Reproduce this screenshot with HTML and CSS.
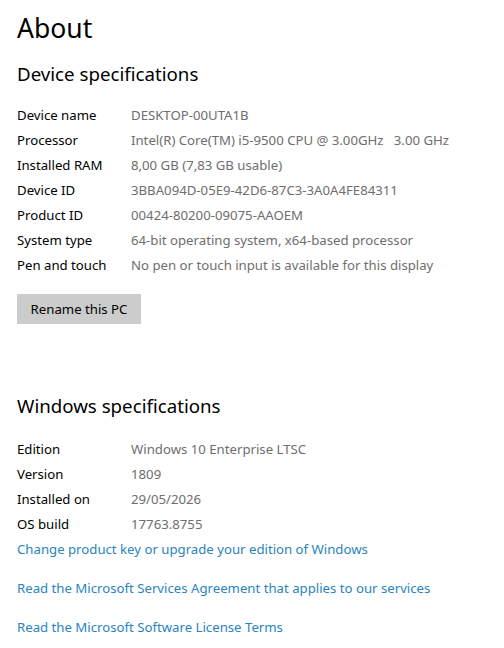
FILE: index.html
```html
<!DOCTYPE html>
<html>
<head>
  <meta charset="UTF-8">
  <title>About</title>
  <link rel="stylesheet" href="styles.css">
</head>
<body>
  <div class="page">
    <h1 class="title">About</h1>

    <h2 class="section">Device specifications</h2>
    <dl class="specs">
      <dt>Device name</dt><dd>DESKTOP-00UTA1B</dd>
      <dt>Processor</dt><dd>Intel(R) Core(TM) i5-9500 CPU @ 3.00GHz   3.00 GHz</dd>
      <dt>Installed RAM</dt><dd>8,00 GB (7,83 GB usable)</dd>
      <dt>Device ID</dt><dd>3BBA094D-05E9-42D6-87C3-3A0A4FE84311</dd>
      <dt>Product ID</dt><dd>00424-80200-09075-AAOEM</dd>
      <dt>System type</dt><dd>64-bit operating system, x64-based processor</dd>
      <dt>Pen and touch</dt><dd>No pen or touch input is available for this display</dd>
    </dl>
    <button class="btn">Rename this PC</button>

    <h2 class="section windows">Windows specifications</h2>
    <dl class="specs os">
      <dt>Edition</dt><dd>Windows 10 Enterprise LTSC</dd>
      <dt>Version</dt><dd>1809</dd>
      <dt>Installed on</dt><dd>29/05/2026</dd>
      <dt>OS build</dt><dd>17763.8755</dd>
    </dl>
    <div class="links">
      <a href="#">Change product key or upgrade your edition of Windows</a>
      <a href="#">Read the Microsoft Services Agreement that applies to our services</a>
      <a href="#">Read the Microsoft Software License Terms</a>
    </div>
  </div>
</body>
</html>
```

FILE: styles.css
```css
body {
  margin: 0;
  background: #fff;
  color: #000;
  font-family: "Noto Sans", "Open Sans", sans-serif;
}

.page {
  padding: 8px 17px 0;
}

.title {
  margin: 0;
  font-size: 26.5px;
  font-weight: 400;
  line-height: 40px;
}

.section {
  margin: 12px 0 0;
  font-size: 18.7px;
  font-weight: 400;
  line-height: 28px;
}

.section.windows {
  margin-top: 68px;
}

.specs {
  display: grid;
  grid-template-columns: 114px 1fr;
  margin: 15px 0 0;
  font-size: 13.2px;
  line-height: 25px;
}

.specs.os {
  margin-top: 17px;
}

.specs dt {
  color: #000;
}

.specs dd {
  margin: 0;
  color: #6e6e6e;
  white-space: pre;
}

.btn {
  margin-top: 16px;
  width: 124px;
  height: 30px;
  border: none;
  background: #cccccc;
  color: #000;
  font-family: inherit;
  font-size: 13.2px;
  padding: 0;
}

.links {
  display: flex;
  flex-direction: column;
  gap: 14px;
  font-size: 13.2px;
  line-height: 25px;
}

.links a {
  color: #2a84bd;
  text-decoration: none;
}
```
